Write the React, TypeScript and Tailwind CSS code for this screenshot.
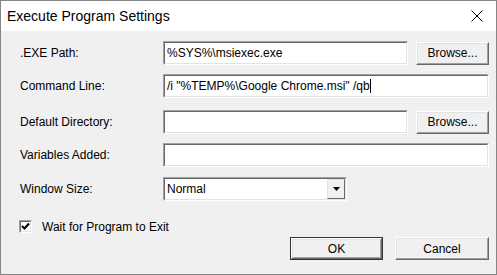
import React from "react";

const sunken =
  "border border-t-[#a0a0a0] border-l-[#a0a0a0] border-r-white border-b-white";
const sunkenInner =
  "border border-t-[#696969] border-l-[#696969] border-r-[#e3e3e3] border-b-[#e3e3e3]";

function TextBox({ value, caret, width }: { value?: string; caret?: boolean; width: string }) {
  return (
    <div className={`${sunken} ${width} h-[24px]`}>
      <div className={`${sunkenInner} h-full bg-white flex items-center pl-[2px] text-[12px] text-black whitespace-pre`}>
        {value}
        {caret && <span className="inline-block w-px h-[14px] bg-black" />}
      </div>
    </div>
  );
}

function Button({ children, width, isDefault }: { children: React.ReactNode; width: string; isDefault?: boolean }) {
  return (
    <div className={`${width} h-[23px] ${isDefault ? "border border-[#333]" : ""}`}>
      <div className="h-full border border-t-white border-l-white border-r-[#696969] border-b-[#696969]">
        <div className="h-full border border-t-[#e3e3e3] border-l-[#e3e3e3] border-r-[#a0a0a0] border-b-[#a0a0a0] bg-[#f0f0f0] flex items-center justify-center text-[12px] text-black">
          {children}
        </div>
      </div>
    </div>
  );
}

function Row({ label, children, className }: { label: string; children: React.ReactNode; className?: string }) {
  return (
    <div className={`flex items-center h-[24px] ${className ?? ""}`}>
      <div className="w-[145px] text-[12px] text-black pl-[2px]">{label}</div>
      {children}
    </div>
  );
}

export default function App() {
  return (
    <div className="w-[497px] h-[275px] border border-[#858585] bg-[#f0f0f0] flex flex-col font-['Liberation_Sans',Arial,sans-serif]">
      <div className="h-[30px] bg-white flex items-center justify-between pl-[6px]">
        <span className="text-[14px] text-black">Execute Program Settings</span>
        <div className="w-[46px] h-full flex items-center justify-center pl-[8px]">
          <svg width="12" height="12" viewBox="0 0 12 12">
            <path d="M0.5 0.5L11.5 11.5M11.5 0.5L0.5 11.5" stroke="#000" strokeWidth="1" />
          </svg>
        </div>
      </div>

      <div className="flex-1 pl-[17px] pr-[7px] pt-[10px]">
        <Row label=".EXE Path:">
          <TextBox value="%SYS%\msiexec.exe" width="w-[245px]" />
          <div className="ml-[8px]">
            <Button width="w-[73px]">Browse...</Button>
          </div>
        </Row>

        <Row label="Command Line:" className="mt-[9px]">
          <TextBox value={'/i "%TEMP%\\Google Chrome.msi" /qb'} caret width="w-[326px]" />
        </Row>

        <Row label="Default Directory:" className="mt-[12px]">
          <TextBox width="w-[245px]" />
          <div className="ml-[8px]">
            <Button width="w-[73px]">Browse...</Button>
          </div>
        </Row>

        <Row label="Variables Added:" className="mt-[9px]">
          <TextBox width="w-[326px]" />
        </Row>

        <Row label="Window Size:" className="mt-[10px]">
          <div className={`${sunken} w-[184px] h-[24px]`}>
            <div className={`${sunkenInner} h-full bg-white flex items-center`}>
              <span className="flex-1 pl-[2px] text-[12px] text-black">Normal</span>
              <div className="w-[18px] h-full border border-t-[#e3e3e3] border-l-[#e3e3e3] border-r-[#696969] border-b-[#696969] bg-[#f0f0f0] flex items-center justify-center">
                <svg width="7" height="4" viewBox="0 0 7 4">
                  <path d="M0 0H7L3.5 4Z" fill="#000" />
                </svg>
              </div>
            </div>
          </div>
        </Row>

        <div className="mt-[19px] flex items-center h-[13px] pl-[1px]">
          <div className={`${sunken} w-[13px] h-[13px]`}>
            <div className={`${sunkenInner} h-full bg-white flex items-center justify-center`}>
              <svg width="9" height="9" viewBox="0 0 9 9">
                <path d="M1 4L3.5 6.5L8 1.5" stroke="#000" strokeWidth="2" fill="none" />
              </svg>
            </div>
          </div>
          <span className="ml-[10px] text-[12px] text-black">Wait for Program to Exit</span>
        </div>

        <div className="mt-[4px] flex justify-end gap-[12px]">
          <Button width="w-[93px]" isDefault>OK</Button>
          <Button width="w-[94px]">Cancel</Button>
        </div>
      </div>
    </div>
  );
}
